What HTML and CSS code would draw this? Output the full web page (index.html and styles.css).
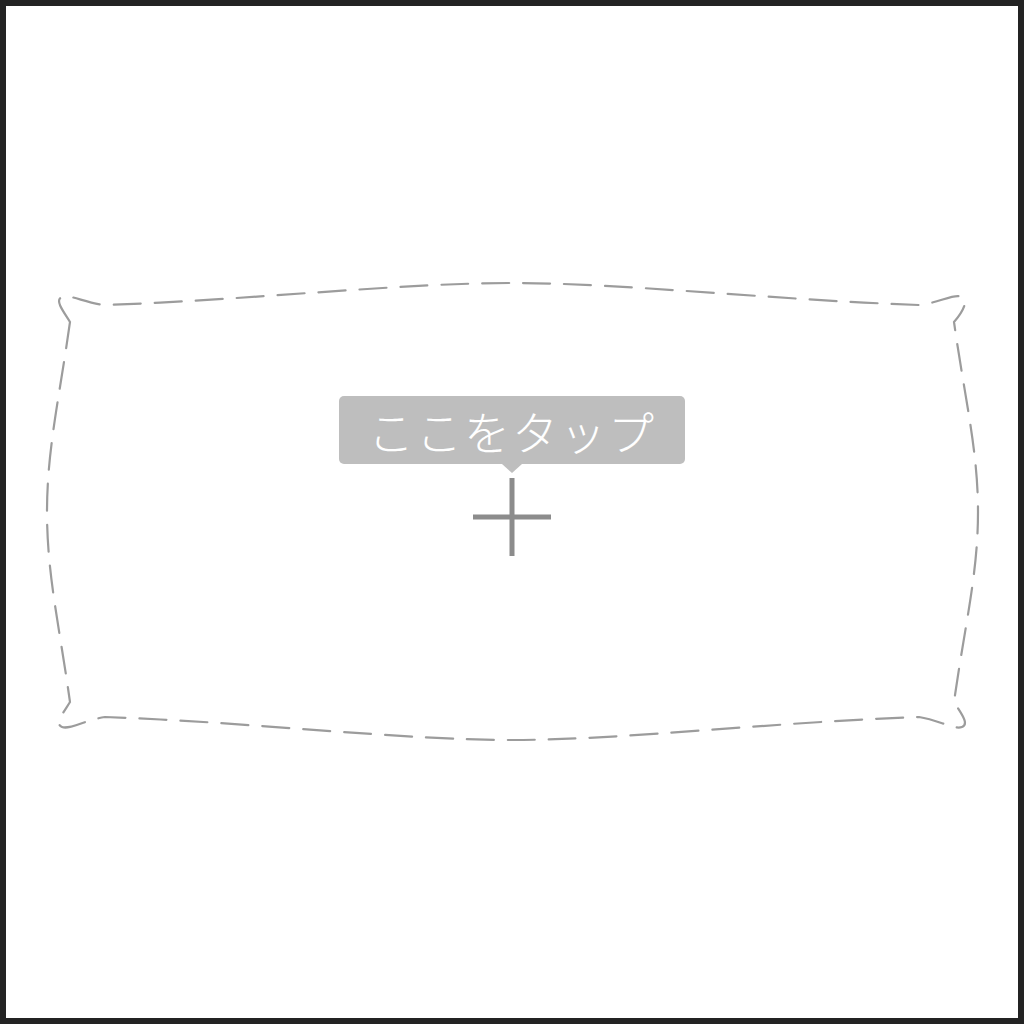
FILE: index.html
```html
<!DOCTYPE html>
<html lang="ja">
<head>
<meta charset="utf-8">
<title>ここをタップ</title>
<link rel="stylesheet" href="styles.css">
</head>
<body>
<div class="frame">
  <div class="stage">
    <svg class="pillow" viewBox="6 6 1012 1012" width="1012" height="1012" aria-hidden="true">
      <path d="M 70,322
               C 64,312 54,300 62,297
               C 70,294 85,303 105,305
               C 250,300 400,283 512,283
               C 624,283 774,300 919,305
               C 939,303 954,293 962,297
               C 970,301 960,315 954,322
               C 965,400 978,450 978,512
               C 978,574 965,624 954,702
               C 960,712 970,724 962,727
               C 954,730 939,720 919,717
               C 774,722 624,740 512,740
               C 400,740 250,722 105,717
               C 85,720 70,730 62,727
               C 54,724 64,712 70,702
               C 59,624 47,574 47,512
               C 47,450 59,400 70,322 Z"
            fill="none" stroke="#9c9c9c" stroke-width="2.2" stroke-dasharray="27 14" stroke-linecap="round"/>
    </svg>
    <div class="center">
      <div class="tip">ここをタップ</div>
      <svg class="plus" viewBox="0 0 78 78" width="78" height="78" aria-hidden="true">
        <rect x="36.5" y="0" width="5" height="78" fill="#8c8c8c"/>
        <rect x="0" y="36.5" width="78" height="5" fill="#8c8c8c"/>
      </svg>
    </div>
  </div>
</div>
</body>
</html>
```

FILE: styles.css
```css
html, body {
  margin: 0;
  padding: 0;
  background: #ffffff;
}

.frame {
  box-sizing: border-box;
  width: 1024px;
  height: 1024px;
  border: 6px solid #232323;
  background: #ffffff;
  overflow: hidden;
}

.stage {
  display: grid;
  width: 1012px;
  height: 1012px;
}

.pillow,
.center {
  grid-area: 1 / 1;
}

.pillow {
  display: block;
}

.center {
  display: flex;
  flex-direction: column;
  align-items: center;
  padding-top: 390px;
  gap: 14px;
  align-self: start;
}

.tip {
  position: relative;
  box-sizing: border-box;
  width: 346px;
  height: 68px;
  border-radius: 5px;
  background: #bebebe;
  color: #ffffff;
  font-family: "Noto Sans CJK JP", "Noto Sans", sans-serif;
  font-weight: 300;
  font-size: 46px;
  letter-spacing: 2px;
  display: flex;
  align-items: center;
  justify-content: center;
  line-height: 1;
}

.tip::after {
  content: "";
  position: absolute;
  left: 50%;
  top: 100%;
  margin-left: -10px;
  border-left: 10px solid transparent;
  border-right: 10px solid transparent;
  border-top: 9px solid #bebebe;
}

.plus {
  display: block;
}
```
